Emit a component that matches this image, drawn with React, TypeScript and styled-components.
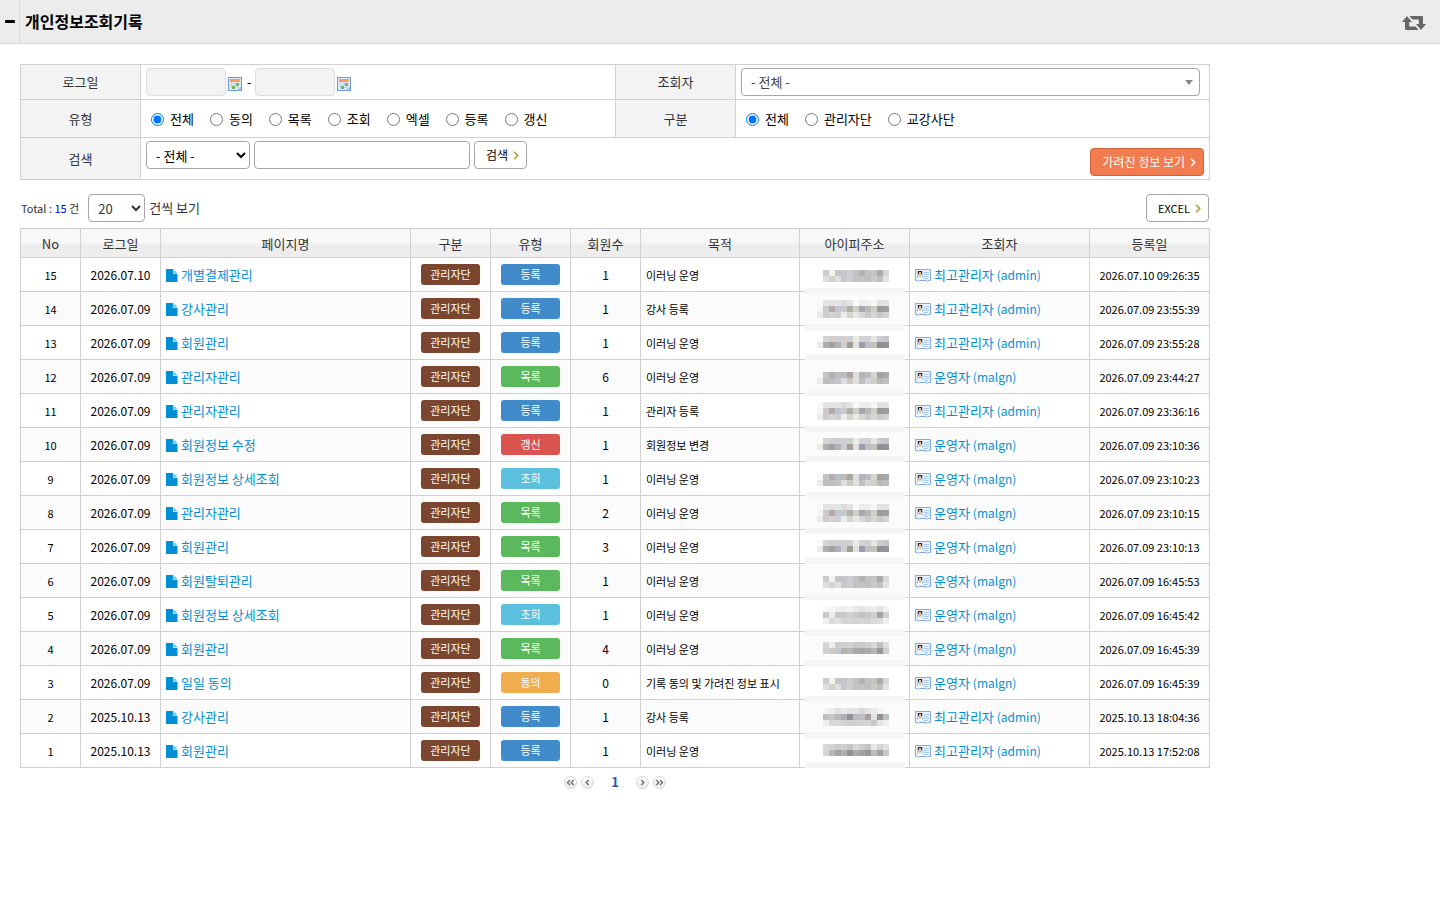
import React from "react";
import styled, { createGlobalStyle, css } from "styled-components";

const GlobalStyle = createGlobalStyle`
  *, *::before, *::after { box-sizing: border-box; }
  body {
    margin: 0;
    background: #fff;
    color: #000;
    font: 13px/20px "Noto Sans CJK KR", "Noto Sans", sans-serif;
  }
  button, input, select { font: inherit; color: inherit; margin: 0; }
`;

/* ---------- data ---------- */

type Kind = "등록" | "목록" | "갱신" | "조회" | "동의";

const kindColors: Record<Kind, string> = {
  등록: "#428bca",
  목록: "#5cb85c",
  갱신: "#d9534f",
  조회: "#5bc0de",
  동의: "#f0ad4e",
};

const masks: Record<string, string[]> = {
  a2: [
    "- c8cccb f4f4ee c4c4c8 c6c6c8 c9ccd2 c0c2c6 b4b3b4 c4c1c2 c6c4c6 adaba6 d6d9dc",
    "- dfe0dd d5d1c8 dae0e6 cac7cb cfcfd1 c1c3c3 c4c4c2 bfbfbf d0cbc2 c2c1be e1e3e5",
  ],
  b3: [
    "fbf9f5 e2e3e4 e3e3e4 e4e4e4 dcd9d6 e3e3e3 f8f8f8 efedeb f0efef f7f7f7 e2e2e2 e2e2e2",
    "f6f5f2 c9cac9 b8aaaa bdc8ce c9c9c9 b0b0aa cfd0c9 a6a5b1 b8b8b9 cfcfc4 9b9c99 999fa6",
    "efebe8 cdcdcd d4d4d6 cfcfd3 e9ebed d8d4cc e7e8e4 d6d8d4 c9c9cf d6d6d6 c9c9ca d2d2d3",
  ],
  b2: [
    "fbfaf5 d3d5d7 d2cecc cbcfd3 d4cfca ccd1d5 eaebe5 d3d3d4 d0d0d1 e4e5e5 cacccf c6c6ca",
    "efebe7 acaeac a29fa2 adb3b8 cbcfd2 a69d93 dfe2e0 9f9ba8 bdc0c4 c6c3b4 8d9193 919499",
  ],
  c2: [
    "f9f8f4 c4c4c5 b4aeb2 b9bcc4 c1bab9 aaa7a5 dde0de b6b4bb bbbbc0 d6d6d4 a6a29e a3a8b1",
    "efeae6 bcbebd bfbec0 c0c3c7 dddddd ccc8c2 dfe2de c1bec6 d3d6d9 d1cfc4 bab9b9 bebfc2",
  ],
  d3: [
    "- f7f8f8 f6f5f4 efefef eeeeef eef2f5 e9e9ea e3e2e3 eaeae9 edecea e4e4e3 f2f2f2",
    "- c6c9c5 ededeb c8c7cb c8c6c8 d0d1d4 c9c9c9 c2c2c3 c9c8c9 cfd0cf a2a5a2 d0d2d2",
    "- f0f1ee dcdad8 e0e3e6 d5d4d7 d6d6d6 d2d3d2 d5d3d3 d4d3d2 dcdad7 dedddd eeeff4",
  ],
  d2: [
    "- d4d5d4 eceded cfced0 d1cfd0 cfd2d6 c9cacb c9c8ca cfcecf d9d8d7 bfc0be dddfdf",
    "- ced2cf cfcbc4 c3c7cf b4b0b1 b5b7bb a9a9aa a7a5a5 abaaab b8b5b2 989993 cdcfd0",
  ],
  e3: [
    "- f2f3f3 ececec e1dfdf e9e9e9 e0e3e6 e3e3e3 d9d8d8 e3e3e3 ebe9e8 f3f3f3 f8f8f8",
    "- bdc0bc c5c6c2 b7b9bd b0b0b5 929295 b8bac0 c0bec2 ab9d9d dfe3e4 96908f bcc1c3",
    "- ededea d9d8d6 d5d6d9 d3d2d2 cfcfd0 d0d1d4 d2d1d3 d6d4d3 c7c7c5 e5e4e4 efeff3",
  ],
  e2: [
    "- d9dad7 d3d3cf c8cacc cecece c4c6c8 d5d8db cccdd1 c6c2c3 e6e7e6 d6d5d3 e0e3e6",
    "- d5d6d2 bab6b0 a2a3a3 aeb0b2 929196 aaacb0 a0a2a6 a0948f b9bcbd 9ea2a4 c6c9ca",
  ],
};

interface Log {
  no: number;
  date: string;
  page: string;
  kind: Kind;
  count: number;
  purpose: string;
  mask: keyof typeof masks;
  user: string;
  id: string;
  created: string;
}

const log = (
  no: number, date: string, time: string, page: string, kind: Kind,
  count: number, purpose: string, mask: string, admin: boolean
): Log => ({
  no, date, page, kind, count, purpose, mask,
  user: admin ? "최고관리자" : "운영자",
  id: admin ? "admin" : "malgn",
  created: `${date} ${time}`,
});

const logs: Log[] = [
  log(15, "2026.07.10", "09:26:35", "개별결제관리", "등록", 1, "이러닝 운영", "a2", true),
  log(14, "2026.07.09", "23:55:39", "강사관리", "등록", 1, "강사 등록", "b3", true),
  log(13, "2026.07.09", "23:55:28", "회원관리", "등록", 1, "이러닝 운영", "b2", true),
  log(12, "2026.07.09", "23:44:27", "관리자관리", "목록", 6, "이러닝 운영", "c2", false),
  log(11, "2026.07.09", "23:36:16", "관리자관리", "등록", 1, "관리자 등록", "b3", true),
  log(10, "2026.07.09", "23:10:36", "회원정보 수정", "갱신", 1, "회원정보 변경", "b2", false),
  log(9, "2026.07.09", "23:10:23", "회원정보 상세조회", "조회", 1, "이러닝 운영", "c2", false),
  log(8, "2026.07.09", "23:10:15", "관리자관리", "목록", 2, "이러닝 운영", "b3", false),
  log(7, "2026.07.09", "23:10:13", "회원관리", "목록", 3, "이러닝 운영", "b2", false),
  log(6, "2026.07.09", "16:45:53", "회원탈퇴관리", "목록", 1, "이러닝 운영", "a2", false),
  log(5, "2026.07.09", "16:45:42", "회원정보 상세조회", "조회", 1, "이러닝 운영", "d3", false),
  log(4, "2026.07.09", "16:45:39", "회원관리", "목록", 4, "이러닝 운영", "d2", false),
  log(3, "2026.07.09", "16:45:39", "일일 동의", "동의", 0, "기록 동의 및 가려진 정보 표시", "a2", false),
  log(2, "2025.10.13", "18:04:36", "강사관리", "등록", 1, "강사 등록", "e3", true),
  log(1, "2025.10.13", "17:52:08", "회원관리", "등록", 1, "이러닝 운영", "e2", true),
];

const kinds = ["전체", "동의", "목록", "조회", "엑셀", "등록", "갱신"];
const groups = ["전체", "관리자단", "교강사단"];

/* ---------- page header ---------- */

const Header = styled.header`
  display: flex;
  align-items: stretch;
  height: 44px;
  background: #ececec;
  border-bottom: 1px solid #d9d9d9;
`;

const FoldButton = styled.button`
  display: flex;
  align-items: center;
  justify-content: center;
  width: 20px;
  padding: 0;
  background: none;
  border: 0;
  border-right: 1px solid #d9d9d9;
`;

const Title = styled.h1`
  flex: 1;
  margin: 0;
  padding-left: 5px;
  font-size: 16px;
  line-height: 43px;
  font-weight: 700;
`;

const RefreshButton = styled.button`
  display: flex;
  align-items: center;
  padding: 2px 14px 0 0;
  background: none;
  border: 0;
`;

const Main = styled.main`
  max-width: 1230px;
  padding: 20px;
`;

/* ---------- form controls ---------- */

const control = css`
  height: 28px;
  border: 1px solid #a6a6a6;
  border-radius: 4px;
  background: #fff;
`;

const DateInput = styled.input`
  ${control}
  width: 80px;
  padding: 0 5px;
  background: #f3f3f3;
  border-color: #dddddd;
`;

const TextInput = styled.input`
  ${control}
  width: 216px;
  padding: 0 8px;
`;

const Select = styled.select<{ $width: number }>`
  ${control}
  width: ${(p) => p.$width}px;
  padding: 0 0 0 5px;
`;

const UserPicker = styled.div`
  position: relative;
  margin-right: 4px;
  svg {
    position: absolute;
    top: 12px;
    right: 7px;
    pointer-events: none;
  }
`;

const UserSelect = styled.select`
  ${control}
  display: block;
  width: 100%;
  padding: 0 24px 0 9px;
  color: #444;
  appearance: none;
`;

const Button = styled.button<{ $accent?: boolean; $small?: boolean }>`
  ${control}
  display: inline-flex;
  align-items: center;
  gap: 5px;
  padding: 0 7px 0 11px;
  font-size: ${(p) => (p.$small ? 11 : 12)}px;
  white-space: nowrap;
  color: #000;
  cursor: pointer;
  svg { color: #b39b3c; }
  ${(p) =>
    p.$accent &&
    css`
      background: #f07c50;
      border-color: #cc6238;
      color: #fff;
      svg { color: #fff; }
    `}
`;

const CalendarButton = styled.button`
  display: flex;
  padding: 3px 0 0;
  background: none;
  border: 0;
`;

const Dash = styled.span`
  padding: 0 1px 0 3px;
`;

/* ---------- filter ---------- */

const FilterTable = styled.table`
  width: 100%;
  border-collapse: collapse;
  table-layout: fixed;
  th, td { border: 1px solid #d0d0d0; }
  th {
    background: #f3f3f3;
    color: #333;
    font-weight: 400;
    text-align: center;
    padding: 0;
  }
  td { padding: 3px 5px; }
`;

const FilterRow = styled.tr<{ $height: number }>`
  height: ${(p) => p.$height}px;
`;

const Inline = styled.div<{ $gap: number }>`
  display: flex;
  align-items: center;
  gap: ${(p) => p.$gap}px;
`;

const SearchLine = styled.div`
  display: flex;
  justify-content: space-between;
  align-items: flex-start;
  > ${Button} { margin-top: 7px; }
`;

const RadioGroup = styled.div`
  display: flex;
  gap: 16px;
  padding: 1px 0 0 5px;
`;

const RadioLabel = styled.label`
  display: flex;
  align-items: center;
  gap: 6px;
  input {
    width: 13px;
    height: 13px;
  }
`;

/* ---------- list toolbar ---------- */

const ListBar = styled.div`
  display: flex;
  align-items: center;
  justify-content: space-between;
  margin: 14px 0 6px;
  padding: 0 1px;
  color: #333;
`;

const Total = styled.span`
  margin-right: 5px;
  font-size: 11px;
  b {
    font-weight: 400;
    color: #0000ee;
  }
`;

/* ---------- list ---------- */

const ListTable = styled.table`
  width: 100%;
  border-collapse: collapse;
  table-layout: fixed;
  th, td {
    border: 1px solid #d0d0d0;
    text-align: center;
    white-space: nowrap;
  }
  th {
    height: 29px;
    padding: 1px 0 0;
    background: linear-gradient(#f8f8f8 50%, #ededed 50%);
    color: #333;
    font-weight: 400;
  }
  td {
    height: 34px;
    padding: 0;
  }
  tbody tr:nth-child(even) { background: #fbfbfb; }
`;

const Cell = styled.td<{ $small?: boolean }>`
  font-size: ${(p) => (p.$small ? 11 : 12)}px;
`;

const StartCell = styled(Cell)`
  && {
    padding-left: 5px;
    text-align: left;
  }
`;

const MaskCell = styled.td`
  position: relative;
  svg {
    position: absolute;
    top: 0;
    left: 5px;
  }
`;

const RecordLink = styled.a`
  display: inline-flex;
  align-items: center;
  gap: 3px;
  color: #008fd5;
  font-size: 13px;
  text-decoration: none;
  vertical-align: middle;
  small { font-size: 12px; }
`;

const Badge = styled.span<{ $color: string }>`
  display: block;
  width: 59px;
  margin: 0 auto;
  border-radius: 3px;
  background: ${(p) => p.$color};
  color: #fff;
  font-size: 11px;
  line-height: 21px;
`;

/* ---------- paging ---------- */

const Paging = styled.nav`
  display: flex;
  align-items: center;
  justify-content: center;
  gap: 4px;
  margin-top: 4px;
  strong {
    padding: 0 13px;
    color: #1c5cb0;
  }
`;

const PageButton = styled.button`
  display: flex;
  align-items: center;
  justify-content: center;
  width: 13px;
  height: 13px;
  padding: 0;
  border: 1px solid #d4d4d4;
  border-radius: 50%;
  background: linear-gradient(#fff, #ececec);
`;

/* ---------- drawings ---------- */

const Chevron = () => (
  <svg width="6" height="9" viewBox="0 0 6 9" fill="none" stroke="currentColor" strokeWidth="1.6">
    <path d="M1 .8 4.7 4.5 1 8.2" />
  </svg>
);

const PageArrow = ({ back, double }: { back?: boolean; double?: boolean }) => (
  <svg width="9" height="7" viewBox="0 0 9 7" fill="none" stroke="#666" strokeWidth="1.3">
    <g transform={back ? "matrix(-1 0 0 1 9 0)" : undefined}>
      {double ? <path d="M1.3 1l2.5 2.5L1.3 6M5 1l2.5 2.5L5 6" /> : <path d="M3.3 1l2.5 2.5L3.3 6" />}
    </g>
  </svg>
);

const RefreshIcon = () => (
  <svg width="24" height="14" viewBox="0 0 24 14" fill="#666">
    <path d="M5 0l5 6H7.200v4.400h6.400l3 3.600H4a1 1 0 0 1-1-1V6H0z" />
    <path d="M19 14l-5-6h2.800V3.600h-6.400L7.400 0H20a1 1 0 0 1 1 1v7h3z" />
  </svg>
);

const CalendarIcon = () => (
  <svg width="14" height="14" viewBox="0 0 14 14">
    <rect x=".5" y=".5" width="13" height="13" fill="#fff" stroke="#6a9bdc" />
    <rect x="1" y="1" width="12" height="12" fill="#dce9f9" />
    <rect x="2" y="2" width="10" height="3" fill="#fb9a5e" />
    <rect x="2" y="5" width="10" height="7" fill="#fff" />
    <path d="M2 6.500h10M2 8.500h10M2 10.500h10M3.500 5v7M5.500 5v7M7.500 5v7M9.500 5v7" stroke="#c6d5ea" />
    <path d="M8 6h3v3H8zM4 9h3v3H4z" fill="#6fb56c" />
    <path d="M9 13l4-4v4z" fill="#a9c8f0" />
  </svg>
);

const FileIcon = () => (
  <svg width="12" height="13" viewBox="0 0 12 13" fill="#008fd5">
    <path d="M.6 0H7v4.400a.6.6 0 0 0 .6.6H11.500v7.400a.6.6 0 0 1-.6.6H.6a.6.6 0 0 1-.6-.6V.6A.6.6 0 0 1 .6 0z" />
    <path d="M7.500 0 11.500 4.500h-4z" fill="#6fbfe6" />
  </svg>
);

const CardIcon = () => (
  <svg width="16" height="13" viewBox="0 0 16 13">
    <path d="M.5.5h15v11h-2l-1 1-1-1h-7l-1 1-1-1h-2z" fill="#eaf3fd" stroke="#7fabe2" />
    <rect x="2" y="2" width="6" height="7" fill="#a9c8ef" />
    <path d="M3 2h4v3H6V4H4v1H3z" fill="#3a2a1c" />
    <rect x="4" y="3" width="2" height="3" fill="#f7c08a" />
    <path d="M3 9V7.500L4 6.500h2l1 1V9z" fill="#fff" />
    <path d="M5 6v2" stroke="#e08a3a" />
    <path d="M9 3.500h5M9 5.500h5M9 7.500h5M9 9.500h4" stroke="#aec9ea" />
  </svg>
);

const MASK_TOPS = [12, 8, 10];
const STRIP_TOPS = [30, 32, 28];

/* Hidden IP address, drawn as blocks on a 6px raster that runs on through the rows. */
const AddressMask = ({ rows, index }: { rows: string[]; index: number }) => (
  <svg width="100" height="38" viewBox="0 0 100 38" shapeRendering="crispEdges" aria-label="가려진 아이피주소">
    <rect y={STRIP_TOPS[index % 3]} width="100" height="6" fill="#f5f5f5" />
    {rows.map((row, r) =>
      row.split(" ").map((color, c) =>
        color === "-" ? null : (
          <rect
            key={`${r}-${c}`}
            x={12 + c * 6}
            y={MASK_TOPS[index % 3] + r * 6}
            width="6"
            height="6"
            fill={`#${color}`}
          />
        )
      )
    )}
  </svg>
);

/* ---------- page ---------- */

const Radios = ({ name, label, options }: { name: string; label: string; options: string[] }) => (
  <RadioGroup role="radiogroup" aria-label={label}>
    {options.map((option, i) => (
      <RadioLabel key={option}>
        <input type="radio" name={name} value={option} defaultChecked={i === 0} />
        {option}
      </RadioLabel>
    ))}
  </RadioGroup>
);

const Filter = () => (
  <FilterTable>
    <colgroup>
      <col style={{ width: 120 }} />
      <col />
      <col style={{ width: 120 }} />
      <col style={{ width: 474 }} />
    </colgroup>
    <tbody>
      <FilterRow $height={35}>
        <th scope="row">로그일</th>
        <td>
          <Inline $gap={2}>
            <DateInput aria-label="시작일" readOnly />
            <CalendarButton type="button" aria-label="시작일 선택"><CalendarIcon /></CalendarButton>
            <Dash>-</Dash>
            <DateInput aria-label="종료일" readOnly />
            <CalendarButton type="button" aria-label="종료일 선택"><CalendarIcon /></CalendarButton>
          </Inline>
        </td>
        <th scope="row"><label htmlFor="viewer">조회자</label></th>
        <td>
          <UserPicker>
            <UserSelect id="viewer"><option>- 전체 -</option></UserSelect>
            <svg width="8" height="5" viewBox="0 0 8 5" fill="#888"><path d="M0 0h8L4 5z" /></svg>
          </UserPicker>
        </td>
      </FilterRow>
      <FilterRow $height={38}>
        <th scope="row">유형</th>
        <td><Radios name="kind" label="유형" options={kinds} /></td>
        <th scope="row">구분</th>
        <td><Radios name="group" label="구분" options={groups} /></td>
      </FilterRow>
      <FilterRow $height={42}>
        <th scope="row">검색</th>
        <td colSpan={3}>
          <SearchLine>
            <Inline $gap={4}>
              <Select $width={104} aria-label="검색 항목"><option>- 전체 -</option></Select>
              <TextInput type="text" aria-label="검색어" />
              <Button type="submit">검색 <Chevron /></Button>
            </Inline>
            <Button type="button" $accent>가려진 정보 보기 <Chevron /></Button>
          </SearchLine>
        </td>
      </FilterRow>
    </tbody>
  </FilterTable>
);

const columns: [string, number | undefined][] = [
  ["No", 60], ["로그일", 80], ["페이지명", 250], ["구분", 80], ["유형", 80],
  ["회원수", 70], ["목적", undefined], ["아이피주소", 110], ["조회자", 180], ["등록일", 120],
];

const List = () => (
  <ListTable>
    <colgroup>
      {columns.map(([name, width]) => <col key={name} style={{ width }} />)}
    </colgroup>
    <thead>
      <tr>{columns.map(([name]) => <th key={name} scope="col">{name}</th>)}</tr>
    </thead>
    <tbody>
      {logs.map((item, index) => (
        <tr key={item.no}>
          <Cell $small>{item.no}</Cell>
          <Cell>{item.date}</Cell>
          <StartCell><RecordLink href="#page"><FileIcon />{item.page}</RecordLink></StartCell>
          <Cell><Badge $color="#7b4630">관리자단</Badge></Cell>
          <Cell><Badge $color={kindColors[item.kind]}>{item.kind}</Badge></Cell>
          <Cell>{item.count}</Cell>
          <StartCell $small>{item.purpose}</StartCell>
          <MaskCell><AddressMask rows={masks[item.mask]} index={index} /></MaskCell>
          <StartCell>
            <RecordLink href="#user"><CardIcon /><span>{item.user} <small>({item.id})</small></span></RecordLink>
          </StartCell>
          <Cell $small>{item.created}</Cell>
        </tr>
      ))}
    </tbody>
  </ListTable>
);

export default function App() {
  return (
    <>
      <GlobalStyle />
      <Header>
        <FoldButton type="button" aria-label="메뉴 접기">
          <svg width="10" height="3" viewBox="0 0 10 3"><rect width="10" height="3" rx="1" /></svg>
        </FoldButton>
        <Title>개인정보조회기록</Title>
        <RefreshButton type="button" aria-label="새로고침"><RefreshIcon /></RefreshButton>
      </Header>
      <Main>
        <form onSubmit={(e) => e.preventDefault()}><Filter /></form>
        <ListBar>
          <Inline $gap={4}>
            <Total>Total : <b>15</b> 건</Total>
            <Select $width={57} id="size"><option>20</option></Select>
            <label htmlFor="size">건씩 보기</label>
          </Inline>
          <Button type="button" $small>EXCEL <Chevron /></Button>
        </ListBar>
        <List />
        <Paging aria-label="페이지">
          <PageButton type="button" aria-label="처음"><PageArrow back double /></PageButton>
          <PageButton type="button" aria-label="이전"><PageArrow back /></PageButton>
          <strong>1</strong>
          <PageButton type="button" aria-label="다음"><PageArrow /></PageButton>
          <PageButton type="button" aria-label="마지막"><PageArrow double /></PageButton>
        </Paging>
      </Main>
    </>
  );
}
